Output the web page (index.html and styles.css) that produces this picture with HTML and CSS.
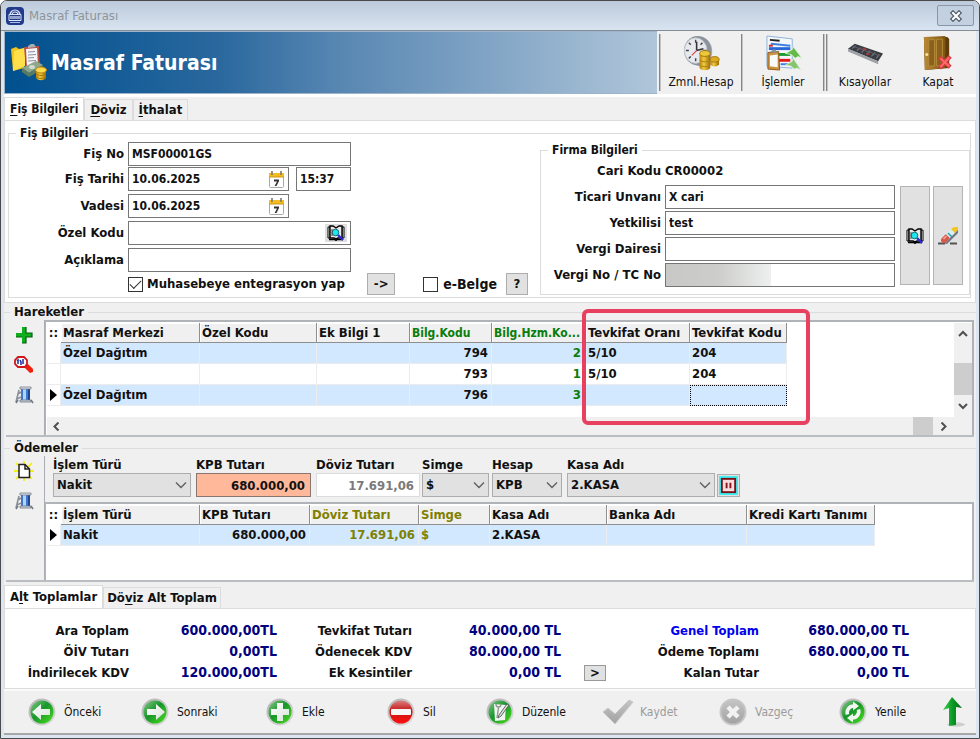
FILE: index.html
```html
<!DOCTYPE html>
<html lang="tr">
<head>
<meta charset="utf-8">
<meta name="viewport" content="width=device-width, initial-scale=1">
<title>Masraf Faturası</title>
<link rel="stylesheet" href="styles.css">
</head>
<body>
<svg class="defs" aria-hidden="true">
  <defs>
    <linearGradient id="gGreen" x1="0" y1="0" x2="1" y2="1"><stop offset="0" stop-color="#8cc88c"/><stop offset=".45" stop-color="#16962a"/><stop offset="1" stop-color="#4be01c"/></linearGradient>
    <linearGradient id="gRed" x1="0" y1="0" x2="0" y2="1"><stop offset="0" stop-color="#d98080"/><stop offset=".45" stop-color="#c81414"/><stop offset="1" stop-color="#ff1010"/></linearGradient>
    <linearGradient id="gGrey" x1="0" y1="0" x2="0" y2="1"><stop offset="0" stop-color="#c4c4c4"/><stop offset="1" stop-color="#a2a2a2"/></linearGradient>
    <linearGradient id="gRim" x1="0" y1="0" x2="1" y2="1"><stop offset="0" stop-color="#b4b4b4"/><stop offset="1" stop-color="#dadada"/></linearGradient>
    <linearGradient id="gWhite" x1="0" y1="0" x2="1" y2="1"><stop offset="0" stop-color="#ffffff"/><stop offset="1" stop-color="#d8e2d8"/></linearGradient>
    <linearGradient id="gGold" x1="0" y1="0" x2="1" y2="0"><stop offset="0" stop-color="#b58412"/><stop offset=".4" stop-color="#f0cc3c"/><stop offset="1" stop-color="#9c6a08"/></linearGradient>
    <linearGradient id="gDoor" x1="0" y1="0" x2="1" y2="0"><stop offset="0" stop-color="#b98a36"/><stop offset="1" stop-color="#7e5514"/></linearGradient>
    <linearGradient id="gUp" x1="0" y1="0" x2="1" y2="0"><stop offset="0" stop-color="#3ccf4c"/><stop offset=".5" stop-color="#0c9a26"/><stop offset="1" stop-color="#04661a"/></linearGradient>
    <symbol id="book" viewBox="0 0 18 16">
      <path d="M1 2h2v11H1zM15 2h2v11h-2z" fill="#fff" stroke="#000"/>
      <path d="M3 1h3l3 2 3-2h3v12h-4l-2 1-2-1H3z" fill="#e8e8e8" stroke="#000" stroke-width="1.4"/>
      <path d="M2 14.5h6l1 1 1-1h6" fill="none" stroke="#000" stroke-width="1.4"/>
      <path d="M11 10l5 5" stroke="#2b2bd8" stroke-width="2.4"/>
      <circle cx="8.500" cy="7.500" r="3.300" fill="#1fe6ee" stroke="#13707a"/>
      <path d="M5 4v7" stroke="#444"/>
    </symbol>
    <symbol id="calendar" viewBox="0 0 17 19">
      <rect x="1.500" y="3.500" width="14" height="14" rx="1" fill="#fff" stroke="#aaa"/>
      <path d="M1 3h15v4H1z" fill="#f4bc1c"/><path d="M1 7h15" stroke="#c99812"/>
      <path d="M4 1v4M13 1v4" stroke="#777" stroke-width="1.600"/>
      <path d="M6 9.500h5v1.500l-2.500 5H6.600l2.400-4.600H6z" fill="#333"/>
    </symbol>
    <symbol id="spool" viewBox="0 0 20 20">
      <path d="M5 5L2 17M4 9l3-2M3 14l4-2" fill="none" stroke="#8a8f98" stroke-width="1.600"/>
      <path d="M7 3.500h9V15H7z" fill="#3f78cf"/>
      <path d="M9 3.500h3V15H9z" fill="#b4d2f6"/><path d="M14 3.500h2V15h-2z" fill="#1d4793"/>
      <path d="M6 2h11v2H6z" fill="#dfe4ea" stroke="#747b87" stroke-width=".8"/>
      <path d="M6 15h11v2H6z" fill="#c9d0da" stroke="#6d7683" stroke-width=".8"/>
      <path d="M4 15l-2 3M17 15l2 3" stroke="#6d7683" stroke-width="1.500"/>
    </symbol>
    <symbol id="chev" viewBox="0 0 12 8"><path d="M1 1.500l5 5 5-5" fill="none" stroke="#606060" stroke-width="1.400"/></symbol>
    <symbol id="arrow" viewBox="0 0 10 7"><path d="M1 6l4-4 4 4" fill="none" stroke="#505050" stroke-width="2"/></symbol>
  </defs>
</svg>

<main class="window">
  <header class="titlebar">
    <svg class="app-icon" viewBox="0 0 18 18"><rect width="18" height="18" rx="4" fill="#223a8c"/><path d="M4 8a5 5 0 0110 0M6 8a3 3 0 016 0" fill="none" stroke="#dfe6fa" stroke-width="1.200"/><path d="M3 7.500h12v6H3z" fill="none" stroke="#dfe6fa"/><path d="M5 9v3M7 9v3M9 9v3M11 9v3M13 9v3" stroke="#dfe6fa" stroke-width="1.200"/><path d="M4 15.500h10" stroke="#aebbe6"/></svg>
    <h1 class="title">Masraf Faturası</h1>
    <button class="close" type="button" aria-label="Pencereyi kapat"><svg viewBox="0 0 14 12"><path d="M4 3l6 6M10 3L4 9" stroke="#4a5560" stroke-width="4.400" stroke-linecap="square"/><path d="M4 3l6 6M10 3L4 9" stroke="#fff" stroke-width="2.200" stroke-linecap="square"/></svg></button>
  </header>

  <section class="banner">
    <div class="hero">
      <svg class="hero-icon" viewBox="0 0 38 38"><path d="M1 5l5-2 3 2 5-1v20L3 27z" fill="#f2c21c"/><path d="M4 7l11-3v18L3 27z" fill="#ffe04a"/><path d="M14 3l15-1 1 22-14 2z" fill="#b85048"/><path d="M16 5l11-1 1 19-11 1z" fill="#f6f6f8"/><path d="M18 2l3-2h3l2 3-8 1z" fill="#a8adb4"/><path d="M18 8l7-.5M18 11l8-.5M18 14l6-.5M18 17l8-.5" stroke="#8b90a0"/><path d="M12 24l14-7 7 4-14 8z" fill="#8fa68d"/><path d="M12 24l7 5 14-8v4l-14 8-7-5z" fill="#5b7a62"/><ellipse cx="22" cy="23" rx="3" ry="2" fill="#cfdccb"/><path d="M26 27h10v7c-2 3-8 3-10 0z" fill="url(#gGold)"/><ellipse cx="31" cy="26" rx="5.500" ry="3" fill="#ffd94a" stroke="#b98914"/><path d="M26 30c2 2 8 2 10 0M26 33c2 2 8 2 10 0" fill="none" stroke="#a87708"/></svg>
      <h2>Masraf Faturası</h2>
    </div>
    <nav class="tools">
      <i class="rule"></i>
      <button class="tool" type="button"><svg viewBox="0 0 38 38"><ellipse cx="18" cy="17" rx="12" ry="15" fill="#a4abb3"/><ellipse cx="15" cy="16" rx="14" ry="15" fill="#8b929b"/><ellipse cx="13" cy="16" rx="11.500" ry="13" fill="#e6eaee" stroke="#c7ccd2"/><path d="M13 5v3M13 24v3M3 16h3M21 16h3M6 8l2 2M20 8l-2 2M6 24l2-2" stroke="#444" stroke-width="1.500"/><path d="M14 16V7M14 16l7-2" stroke="#333" stroke-width="1.600"/><path d="M14 16l-5 5" stroke="#d44" stroke-width="1.200"/><path d="M28 25h9v5c-2 3-7 3-9 0z" fill="url(#gGold)"/><ellipse cx="32.500" cy="25" rx="4.600" ry="2.800" fill="#d9ac22" stroke="#a87708"/><path d="M17 20h11v14c-2 3-9 3-11 0z" fill="url(#gGold)"/><ellipse cx="22.500" cy="19" rx="5.500" ry="3" fill="#ecc93a" stroke="#a87708"/><path d="M17 26c2 2 9 2 11 0M17 31c2 2 9 2 11 0" fill="none" stroke="#b08210"/></svg>Zmnl.Hesap</button>
      <i class="rule"></i>
      <button class="tool" type="button"><svg viewBox="0 0 38 38"><path d="M2 1l26 3v30L2 32z" fill="#f3f7fc" stroke="#8eb2da"/><path d="M5 5l10 1" stroke="#222" stroke-width="2"/><path d="M6 9l20 2" stroke="#3e7fe0" stroke-width="2"/><path d="M4 14h22" stroke="#2866d8" stroke-width="3"/><path d="M4 10h4v2H4z" fill="#d22"/><path d="M9 20h17" stroke="#1c9a34" stroke-width="3"/><path d="M10 26h16" stroke="#e01b1b" stroke-width="3"/><path d="M16 30h10" stroke="#3e7fe0" stroke-width="2"/><path d="M3 18l11-1 1 19-12-1z" fill="#cc9440" stroke="#8b5c1a"/><path d="M5 21l8-1v13l-8-1z" fill="#f8fafc"/><path d="M6 17l2-2h3l1 3H6z" fill="#8b929b"/><path d="M21 19l7-4 1-3 9 12-4-2-3 2-4-4z" fill="#66b84a" stroke="#dff3d6" stroke-width=".8"/><path d="M21 31l7-4 1-3 8 12-4-2-3 1-3-3z" fill="#86c46d" stroke="#dff3d6" stroke-width=".8"/></svg>İşlemler</button>
      <i class="rule"></i><i class="rule"></i>
      <button class="tool" type="button"><svg viewBox="0 0 38 38"><path d="M1 14L8 9l29 10-5 8z" fill="#3a3c42"/><path d="M1 14l31 13v3L1 17z" fill="#9da1a8"/><path d="M5 14l4-3M10 16l4-3M15 18l4-4M20 20l4-4M25 22l4-4M30 24l3-4" stroke="#70747d" stroke-width="1.200"/><path d="M6 11.500l28 10" stroke="#5c6069"/><path d="M16 14l4 1M20 19l3 1" stroke="#c0352f" stroke-width="1.500"/></svg>Kısayollar</button>
      <button class="tool" type="button"><svg viewBox="0 0 38 38"><path d="M4 2h24l2 2v30l-25 2z" fill="#5e3d0b"/><path d="M4 2l22-1v33l-21 2z" fill="url(#gDoor)"/><path d="M9 5l6-.4v27l-6 .5zM17 4.500l6-.4v27l-6 .5z" fill="#8a611c" stroke="#b48a3a"/><circle cx="7" cy="20" r="1.600" fill="#f6e39a"/><path d="M20 23l11 10M31 22L20 34" stroke="#d83a42" stroke-width="4.400"/><path d="M21 24l9 8M30 23l-9 10" stroke="#ff6a70" stroke-width="2"/></svg>Kapat</button>
    </nav>
  </section>

  <nav class="tabs upper">
    <button class="tab active" type="button"><u>F</u>iş Bilgileri</button><button class="tab" type="button"><u>D</u>öviz</button><button class="tab" type="button"><u>İ</u>thalat</button>
  </nav>

  <section class="page">
    <fieldset class="group receipt">
      <legend>Fiş Bilgileri</legend>
      <div class="receipt-form">
        <label for="no">Fiş No</label>
        <div class="line"><span class="box"><input id="no" value="MSF00001GS"></span></div>
        <label for="date">Fiş Tarihi</label>
        <div class="line"><span class="box"><input id="date" value="10.06.2025"><button type="button" aria-label="Takvim"><svg class="cal"><use href="#calendar"/></svg></button></span><span class="box time"><input aria-label="Saat" value="15:37"></span></div>
        <label for="due">Vadesi</label>
        <div class="line short"><span class="box"><input id="due" value="10.06.2025"><button type="button" aria-label="Takvim"><svg class="cal"><use href="#calendar"/></svg></button></span></div>
        <label for="code">Özel Kodu</label>
        <div class="line"><span class="box"><input id="code"><button class="lookup" type="button" aria-label="Ara"><svg class="find"><use href="#book"/></svg></button></span></div>
        <label for="desc">Açıklama</label>
        <div class="line"><span class="box"><input id="desc"></span></div>
        <div class="checks">
          <label class="check"><input type="checkbox" checked>Muhasebeye entegrasyon yap</label>
          <button class="push" type="button">-&gt;</button>
          <label class="check big"><input type="checkbox">e-Belge</label>
          <button class="push narrow" type="button">?</button>
        </div>
      </div>
      <fieldset class="group firm">
        <legend>Firma Bilgileri</legend>
        <div class="firm-body">
          <div class="firm-form">
            <span class="lbl">Cari Kodu</span><output>CR00002</output>
            <label for="f1">Ticari Unvanı</label><span class="box"><input id="f1" value="X cari"></span>
            <label for="f2">Yetkilisi</label><span class="box"><input id="f2" value="test"></span>
            <label for="f3">Vergi Dairesi</label><span class="box"><input id="f3"></span>
            <label for="f4">Vergi No / TC No</label><span class="box masked"><input id="f4"></span>
          </div>
          <button class="tall" type="button" aria-label="Cari ara"><svg class="find"><use href="#book"/></svg></button>
          <button class="tall" type="button" aria-label="Temizle"><svg class="eraser" viewBox="0 0 20 18"><path d="M0 16.500h7M12 16.500h7" stroke="#555" stroke-width="2.200"/><path d="M4 11l4-4 4 4-4 5H5c-2-1-3-3-1-5z" fill="#d8584c"/><path d="M5 11.500l3-3 1 1-3 3z" fill="#f4a79e"/><path d="M8 7l5-5 4 4-5 5z" fill="#d8eef0"/><path d="M10 6l4 4" stroke="#2f9fac" stroke-width="1.600"/><path d="M13 2l3-2h4v3l-3 3z" fill="#f1c61e"/><path d="M20 3v3L9 17H7l5-6z" fill="#6c7686"/></svg></button>
        </div>
      </fieldset>
    </fieldset>
  </section>

  <fieldset class="band">
    <legend>Hareketler</legend>
    <div class="split moves">
      <div class="side">
        <button type="button" aria-label="Ekle"><svg viewBox="0 0 20 20"><path d="M8 2h4v6h6v4h-6v6H8v-6H2V8h6z" fill="#0fae1c"/><path d="M12 2v6h6v4h-6v6H8M2 12h6" fill="none" stroke="#0a5c12" stroke-width="1.200"/></svg></button>
        <button type="button" aria-label="Detay"><svg viewBox="0 0 20 20"><path d="M11 11l3-2 5 5v3l-3 1-5-5z" fill="#f02010"/><path d="M4 2h6l3 3v4l-2 3H4L1 9V5z" fill="#fff" stroke="#d0181c" stroke-width="1.800"/><path d="M3 6l1-1v4M6 5l1 2v3M9 4v5" stroke="#1c2c9c" stroke-width="1.500" fill="none"/></svg></button>
        <button type="button" aria-label="Sil"><svg><use href="#spool"/></svg></button>
      </div>
      <div class="grid-view scrolled">
        <div class="sheet">
          <table class="moves-table">
            <colgroup><col class="g"><col class="m1"><col class="m2"><col class="m3"><col class="m4"><col class="m5"><col class="m6"><col class="m7"></colgroup>
            <thead><tr><th class="grip">::</th><th>Masraf Merkezi</th><th>Özel Kodu</th><th>Ek Bilgi 1</th><th class="green">Bilg.Kodu</th><th class="green">Bilg.Hzm.Ko...</th><th>Tevkifat Oranı</th><th>Tevkifat Kodu</th></tr></thead>
            <tbody>
              <tr class="blue"><td class="mark"></td><td>Özel Dağıtım</td><td></td><td></td><td class="num">794</td><td class="num green tight">2</td><td>5/10</td><td>204</td></tr>
              <tr><td class="mark"></td><td></td><td></td><td></td><td class="num">793</td><td class="num green tight">1</td><td>5/10</td><td>204</td></tr>
              <tr class="blue"><td class="mark"><i class="pointer"></i></td><td>Özel Dağıtım</td><td></td><td></td><td class="num">796</td><td class="num green tight">3</td><td></td><td class="focus"></td></tr>
            </tbody>
          </table>
          <div class="callout"></div>
        </div>
        <div class="vbar"><svg class="up"><use href="#arrow"/></svg><i></i><svg class="down"><use href="#arrow"/></svg></div>
        <div class="hbar"><svg class="left"><use href="#arrow"/></svg><i></i><svg class="right"><use href="#arrow"/></svg></div>
      </div>
    </div>
  </fieldset>

  <fieldset class="band">
    <legend>Ödemeler</legend>
    <div class="split pays">
      <div class="side">
        <button type="button" aria-label="Yeni"><svg viewBox="0 0 20 20"><path d="M10 0v20M0 10h20M2 2l16 16M18 2L2 18" stroke="#f4f01c" stroke-width="1.800"/><path d="M5 3.500h6l4.500 4.500v8.500H5z" fill="#fff" stroke="#222" stroke-width="1.500"/><path d="M11 3.500V8h4.500" fill="none" stroke="#222" stroke-width="1.500"/></svg></button>
        <button type="button" aria-label="Sil"><svg><use href="#spool"/></svg></button>
      </div>
      <div class="pay-body">
        <div class="pay-form">
          <div class="f w1"><label for="p1">İşlem Türü</label><span class="combo"><select id="p1"><option>Nakit</option></select><svg><use href="#chev"/></svg></span></div>
          <div class="f w2"><label for="p2">KPB Tutarı</label><input class="amount hot" id="p2" value="680.000,00"></div>
          <div class="f w3"><label for="p3">Döviz Tutarı</label><input class="amount dim" id="p3" value="17.691,06"></div>
          <div class="f w4"><label for="p4">Simge</label><span class="combo"><select id="p4"><option>$</option></select><svg><use href="#chev"/></svg></span></div>
          <div class="f w5"><label for="p5">Hesap</label><span class="combo"><select id="p5"><option>KPB</option></select><svg><use href="#chev"/></svg></span></div>
          <div class="f w6"><label for="p6">Kasa Adı</label><span class="combo"><select id="p6"><option>2.KASA</option></select><svg><use href="#chev"/></svg></span></div>
          <button class="pause" type="button" aria-label="Beklet"><svg viewBox="0 0 20 20"><rect width="20" height="20" fill="#3deef2"/><rect x="3" y="3" width="14" height="14" fill="#f6dede" stroke="#7c1014" stroke-width="2"/><path d="M8 7v6M12 7v6" stroke="#8c1418" stroke-width="2"/></svg></button>
        </div>
        <div class="grid-view">
          <table class="pays-table">
            <colgroup><col class="g"><col class="q1"><col class="q2"><col class="q3"><col class="q4"><col class="q5"><col class="q6"><col class="q7"></colgroup>
            <thead><tr><th class="grip">::</th><th>İşlem Türü</th><th>KPB Tutarı</th><th class="olive">Döviz Tutarı</th><th class="olive">Simge</th><th>Kasa Adı</th><th>Banka Adı</th><th>Kredi Kartı Tanımı</th></tr></thead>
            <tbody><tr class="blue"><td class="mark"><i class="pointer"></i></td><td>Nakit</td><td class="num">680.000,00</td><td class="num olive">17.691,06</td><td class="olive">$</td><td>2.KASA</td><td></td><td></td></tr></tbody>
          </table>
        </div>
      </div>
    </div>
  </fieldset>

  <nav class="tabs lower">
    <button class="tab active" type="button">A<u>l</u>t Toplamlar</button><button class="tab" type="button">Dö<u>v</u>iz Alt Toplam</button>
  </nav>

  <section class="totals">
    <span>Ara Toplam</span><b>600.000,00TL</b><span>Tevkifat Tutarı</span><b>40.000,00 TL</b><i></i><span class="link">Genel Toplam</span><b>680.000,00 TL</b>
    <span>ÖİV Tutarı</span><b>0,00TL</b><span>Ödenecek KDV</span><b>80.000,00 TL</b><i></i><span>Ödeme Toplamı</span><b>680.000,00 TL</b>
    <span>İndirilecek KDV</span><b>120.000,00TL</b><span>Ek Kesintiler</span><b>0,00 TL</b><button class="more" type="button">&gt;</button><span>Kalan Tutar</span><b>0,00 TL</b>
  </section>

  <footer class="actions">
    <button type="button"><svg viewBox="0 0 28 28"><circle cx="14" cy="14" r="13.500" fill="url(#gRim)"/><circle cx="14" cy="14" r="11.500" fill="url(#gGreen)"/><path d="M4 14l9-8v5h9v6h-9v5z" fill="url(#gWhite)"/></svg>Önceki</button>
    <button type="button"><svg viewBox="0 0 28 28"><circle cx="14" cy="14" r="13.500" fill="url(#gRim)"/><circle cx="14" cy="14" r="11.500" fill="url(#gGreen)"/><path d="M24 14l-9-8v5H6v6h9v5z" fill="url(#gWhite)"/></svg>Sonraki</button>
    <button type="button"><svg viewBox="0 0 28 28"><circle cx="14" cy="14" r="13.500" fill="url(#gRim)"/><circle cx="14" cy="14" r="11.500" fill="url(#gGreen)"/><path d="M11 5h6v6h6v6h-6v6h-6v-6H5v-6h6z" fill="url(#gWhite)"/></svg>Ekle</button>
    <button type="button"><svg viewBox="0 0 28 28"><circle cx="14" cy="14" r="13.500" fill="url(#gRim)"/><circle cx="14" cy="14" r="11.500" fill="url(#gRed)"/><rect x="4" y="11" width="20" height="6" rx="1" fill="#f6f6f6"/></svg>Sil</button>
    <button type="button"><svg viewBox="0 0 28 28"><circle cx="14" cy="14" r="13.500" fill="url(#gRim)"/><circle cx="14" cy="14" r="11.500" fill="url(#gGreen)"/><path d="M8 6l12 1-1 15-10 1z" fill="#f2f5f2"/><path d="M10 6c0 4 5 4 5 0M12.500 9.500L11 20" fill="none" stroke="#8c9a90" stroke-width="1.400"/><path d="M21 6l-8 11-1 3 3-2 8-11z" fill="#dfe4df" stroke="#4c5a50" stroke-width=".9"/></svg>Düzenle</button>
    <button type="button" disabled><svg class="wide" viewBox="0 0 32 28"><path d="M1 14l5-4 7 6L27 2l4 2-18 22z" fill="url(#gGrey)" stroke="#c9c9c9"/></svg>Kaydet</button>
    <button type="button" disabled><svg viewBox="0 0 28 28"><circle cx="14" cy="14" r="13.500" fill="#c6c6c6"/><circle cx="14" cy="14" r="11.500" fill="url(#gGrey)"/><path d="M9 9l10 10M19 9L9 19" stroke="#f2f2f2" stroke-width="4.500"/></svg>Vazgeç</button>
    <button type="button"><svg viewBox="0 0 28 28"><circle cx="14" cy="14" r="13.500" fill="url(#gRim)"/><circle cx="14" cy="14" r="11.500" fill="url(#gGreen)"/><path d="M8.500 16.500A6.500 6.500 0 0115 8M19.500 11.500A6.500 6.500 0 0113 20" fill="none" stroke="#f1f6f1" stroke-width="3.600"/><path d="M14 3.500l6 4.500-6 4.500zM14 15.500v9L8 20z" fill="#f1f6f1"/></svg>Yenile</button>
    <button class="top" type="button" aria-label="Yukarı"><svg class="upward" viewBox="0 0 28 32"><ellipse cx="18" cy="28.500" rx="9" ry="2.200" fill="#cdd1cd"/><path d="M14 1l10 11-6-1v18l-7 1V12l-6 2z" fill="url(#gUp)"/></svg></button>
  </footer>
</main>
</body>
</html>
```
FILE: styles.css
```css
* { box-sizing: border-box; }

body {
  margin: 0;
  background: #fff;
  color: #111;
  font: bold 13px/16px "DejaVu Sans Condensed", "DejaVu Sans", sans-serif;
}

button, input, select, output { font: inherit; color: inherit; }
button { padding: 0; border: 0; background: none; }
svg { display: block; }
.defs { position: absolute; width: 0; height: 0; }

.window {
  display: flex;
  flex-direction: column;
  min-height: 100vh;
  padding: 0 3px 3px;
  border: 1px solid #4a4a4a;
  border-radius: 7px 7px 0 0;
  background: #f0f0f0;
  box-shadow: inset 0 0 0 3px #dbe6f2;
}

/* Title bar */
.titlebar {
  display: flex;
  align-items: center;
  gap: 5px;
  height: 30px;
  margin: 0 -3px;
  padding: 0 5px;
  border-bottom: 1px solid #858c93;
  border-radius: 6px 6px 0 0;
  background: linear-gradient(#bccada, #d8e4f1);
}
.app-icon { width: 18px; height: 18px; }
.title { flex: 1; margin: 0; color: #8d949b; font-size: 13px; font-weight: normal; }
.close {
  display: flex;
  align-items: center;
  justify-content: center;
  width: 37px;
  height: 21px;
  border: 1px solid #8796a8;
  border-radius: 2px;
  background: #c3d0df;
}
.close svg { width: 14px; height: 12px; }

/* Banner */
.banner { display: flex; height: 66px; border-bottom: 3px solid #fff; background: #f0f0f0; }
.hero {
  display: flex;
  flex: 1;
  align-items: center;
  gap: 3px;
  padding-left: 5px;
  border: 1px solid #9db4cb;
  border-width: 1px 0 1px 1px;
  background: linear-gradient(90deg, #00508f, #2a689e 33%, #5585b1 50%, #b0c6da);
}
.hero-icon { width: 38px; height: 38px; }
.hero h2 { margin: 0; color: #fff; font-size: 21px; line-height: 26px; }
.tools { display: flex; gap: 1px; padding: 3px 2px; }
.rule { width: 2px; border-left: 1px solid #868686; background: #c4c4c4; }
.tool {
  display: flex;
  flex-direction: column;
  align-items: center;
  gap: 2px;
  width: 78px;
  padding-top: 1px;
  font-size: 12px;
  font-weight: normal;
}
.tool:nth-of-type(n+3) { width: 72px; }
.tool svg { width: 37px; height: 37px; }

/* Tabs */
.tabs { display: flex; align-items: flex-end; height: 23px; background: #f0f0f0; }
.tab {
  height: 21px;
  padding: 0 5px;
  border: 1px solid #dcdcdc;
  border-bottom: 0;
  background: #f0f0f0;
}
.tab.active { height: 23px; background: #fff; }
.upper .active { font-size: 12px; }
.lower .tab { padding: 0 3px; }
.lower .active { padding: 0 5px; }
u { text-underline-offset: 2px; }

.page { padding: 4px 4px 4px 3px; border: 1px solid #dcdcdc; background: #fff; }
.group { min-width: 0; margin: 0; padding: 0; border: 1px solid #dcdcdc; }
.group > legend { font-size: 12px; }
legend { margin-left: 7px; padding: 0 4px; line-height: 16px; }

/* Receipt form */
.receipt { padding: 1px 0 2px; }
.receipt-form {
  display: grid;
  float: left;
  grid-template-columns: 115px 223px;
  grid-template-rows: 25px repeat(4, 27px);
  column-gap: 4px;
}
.receipt-form > label, .firm-form > label, .lbl { align-self: start; padding-top: 4px; text-align: right; }
.line { display: flex; gap: 7px; align-items: flex-start; }
.short { padding-right: 62px; }
.box {
  display: flex;
  flex: 1;
  align-items: center;
  width: 100%;
  height: 24px;
  border: 1px solid #767676;
  background: #fff;
  font-size: 12px;
}
.box.time { flex: 0 0 55px; }
.box input { flex: 1; min-width: 0; width: 0; padding: 0 3px; border: 0; outline: 0; background: none; }
.box button { margin-right: 3px; }
.cal { width: 17px; height: 19px; }
.find { width: 18px; height: 16px; }
.lookup { padding: 1px 2px; background: #dedede; }
.checks { display: flex; grid-column: 2; align-items: center; width: 400px; height: 18px; }
.check { display: flex; align-items: center; gap: 4px; }
.check input {
  appearance: none;
  width: 15px;
  height: 15px;
  margin: 0;
  border: 1px solid #333;
  background: #fff;
}
.check input:checked::after {
  content: "";
  display: block;
  width: 10px;
  height: 5px;
  margin: 2px 1px;
  border: solid #333;
  border-width: 0 0 1px 1px;
  transform: rotate(-45deg);
}
.check.big { gap: 5px; margin-left: 28px; font-size: 14px; }
.push { width: 28px; height: 22px; margin-left: auto; border: 1px solid #adadad; background: #e1e1e1; }
.push.narrow { width: 22px; margin-left: 9px; }

/* Company details */
.firm { float: right; width: 430px; }
.firm-body { display: flex; align-items: flex-start; padding: 1px 6px 5px 0; }
.firm-form {
  display: grid;
  flex: 1;
  grid-template-columns: 120px 1fr;
  grid-auto-rows: 26px;
  column-gap: 4px;
}
.firm-form output { padding-top: 4px; }
.masked { background: linear-gradient(90deg, #c8c8c6, #cdcdcb 50%, #edf0ef) 0 0 / 105px 100% no-repeat #fff; }
.tall {
  display: flex;
  align-items: center;
  justify-content: center;
  width: 30px;
  height: 99px;
  margin: 27px 0 0 3px;
  border: 1px solid #b4b4b4;
  background: #e1e1e1;
}
.firm-form + .tall { margin-left: 5px; }
.eraser { width: 20px; height: 18px; }

/* Bands with a side toolbar */
.band {
  min-width: 0;
  margin: 0;
  padding: 0 2px 3px;
  border: solid #dcdcdc;
  border-width: 1px 0 0;
}
.page + .band { margin-top: 1px; }
.band legend { margin-left: 4px; }
.split { display: flex; border-bottom: 2px solid #b9bcc0; }
.side {
  display: flex;
  flex-direction: column;
  gap: 10px;
  width: 39px;
  padding: 5px 8px;
  background: #f0f0f0;
  border-right: 1px solid #aaadb1;
}
.side svg { width: 20px; height: 20px; }
.moves { height: 117px; }
.pays { height: 126px; }
.pay-body { display: flex; flex: 1; flex-direction: column; min-width: 0; }

.grid-view {
  flex: 1;
  min-width: 0;
  padding: 1px 0 0 1px;
  border: solid #b0b4b9;
  border-width: 2px 2px 0 1px;
  background: #fff;
}
.scrolled { display: grid; grid-template-columns: 1fr 18px; grid-template-rows: 1fr 18px; }
.sheet { position: relative; min-width: 0; }

table { table-layout: fixed; border-collapse: separate; border-spacing: 0; width: 0; }
.g { width: 14px; }
.m1 { width: 139px; } .m2 { width: 117px; } .m3 { width: 93px; } .m4 { width: 82px; }
.m5 { width: 94px; } .m6 { width: 104px; } .m7 { width: 97px; }
.q1 { width: 139px; } .q2 { width: 110px; } .q3 { width: 109px; } .q4 { width: 71px; }
.q5 { width: 117px; } .q6 { width: 140px; } .q7 { width: 128px; }
th, td { padding: 0 2px; overflow: hidden; text-align: left; white-space: nowrap; }
th {
  height: 20px;
  border: solid #8f8f8f;
  border-width: 0 1px 1px 0;
  background: #f0f0f0;
  box-shadow: inset 1px 1px #fff;
}
th.grip { padding: 0; border-color: #fff; background: #fff; text-align: center; }
th.green { font-size: 12px; }
td { height: 21px; border: solid #ececec; border-width: 0 1px 1px 0; }
.blue td { background: #d1e8ff; }
td.mark, .blue td.mark { padding: 0 0 0 3px; background: #fff; }
.pointer {
  display: block;
  width: 0;
  border: solid transparent;
  border-width: 6px 0 6px 7px;
  border-left-color: #000;
}
.num { padding-right: 3px; text-align: right; }
.num.tight { padding-right: 4px; }
.green { color: #0a7d0a; }
.olive { color: #808000; }
td.focus { border: 1px dotted #000; }

.callout {
  position: absolute;
  top: -14px;
  left: 535px;
  width: 228px;
  height: 116px;
  border: 4px solid #e8405f;
  border-radius: 6px;
}

.vbar, .hbar { display: flex; align-items: center; background: #f0f0f0; }
.vbar { flex-direction: column; padding: 7px 0; }
.vbar i { width: 18px; height: 32px; margin-top: auto; background: #cdcdcd; }
.vbar .down { margin-top: 8px; }
.hbar { grid-column: 1 / 3; padding: 0 23px 0 4px; }
.hbar i { width: 20px; height: 18px; margin: 0 6px 0 auto; background: #cdcdcd; }
.up, .down, .left, .right { width: 10px; height: 7px; }
.down { transform: rotate(180deg); }
.left { transform: rotate(-90deg); }
.right { transform: rotate(90deg); }

/* Payment entry */
.pay-form { display: flex; align-items: flex-end; gap: 5px; height: 46px; padding: 0 0 5px 8px; }
.f { display: flex; flex-direction: column; white-space: nowrap; }
.w1 { width: 138px; } .w2 { width: 115px; } .w3 { width: 104px; margin-right: -3px; }
.w4 { width: 67px; margin-right: -2px; } .w5 { width: 70px; } .w6 { width: 148px; }
.combo { position: relative; display: flex; }
.combo select {
  appearance: none;
  width: 100%;
  height: 24px;
  padding: 0 3px;
  border: 1px solid #adadad;
  border-radius: 0;
  background: #e1e1e1;
}
.combo svg { position: absolute; top: 8px; right: 4px; width: 12px; height: 8px; pointer-events: none; }
.amount { width: 100%; height: 24px; padding: 0 5px; border: 1px solid #dcdcdc; background: #fff; text-align: right; }
.amount.hot { border-color: #8a7670; background: #ffb899; }
.amount.dim { color: #7a7a7a; }
.pause { width: 23px; height: 23px; margin-left: -3px; padding: 1px; border: 1px solid #adadad; background: #e1e1e1; }
.pause svg { width: 19px; height: 19px; }

/* Totals */
.totals {
  display: grid;
  grid-template-columns: 124px 148px 135px 149px 45px 153px 150px;
  grid-auto-rows: 21px;
  padding: 11px 0 5px;
  border: 1px solid #dcdcdc;
  background: #fff;
  line-height: 21px;
  text-align: right;
}
.totals b { color: #000080; font-size: 14px; }
.totals .link { color: #0000f0; }
.more { align-self: center; justify-self: end; width: 22px; height: 16px; border: 1px solid #999; background: #e1e1e1; line-height: 12px; }

/* Footer actions */
.actions {
  display: grid;
  flex: 1;
  grid-template-columns: 113fr 125fr 121fr 99fr 116fr 117fr 120fr 99fr 38fr;
  align-items: center;
  min-height: 46px;
  padding-left: 24px;
  border-top: 2px solid #fafafa;
  border-bottom: 2px solid #a8a8a8;
  background: #f0f0f0;
}
.actions button { display: flex; align-items: center; gap: 8px; font-size: 12px; font-weight: normal; }
.actions button:disabled { color: #9b9b9b; }
.actions svg { flex: none; width: 28px; height: 28px; }
.actions .wide { width: 32px; margin-right: -2px; }
.actions .upward { height: 32px; }
```
